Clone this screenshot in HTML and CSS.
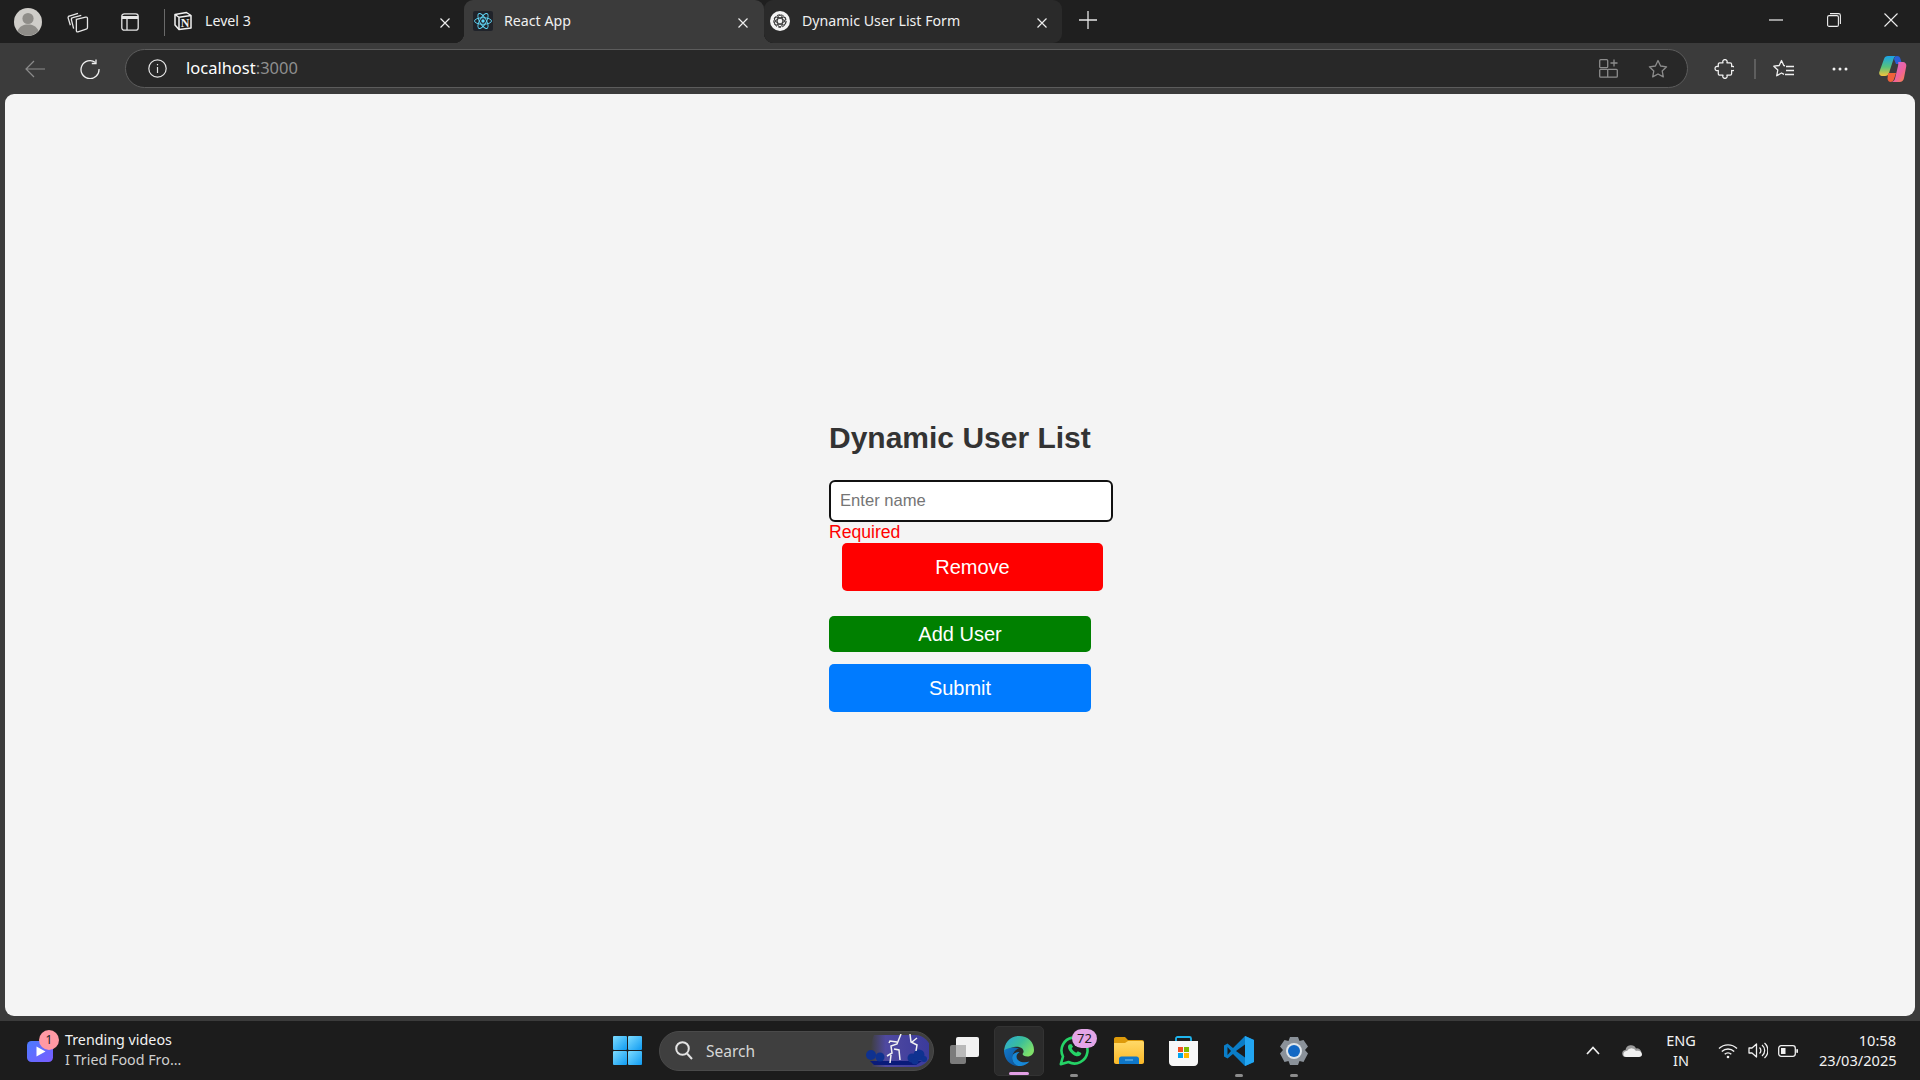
FILE: index.html
```html
<!DOCTYPE html>
<html lang="en">
<head>
<meta charset="utf-8">
<title>Dynamic User List</title>
<link rel="stylesheet" href="styles.css">
</head>
<body>
<header class="tabstrip">
  <div class="slot s-avatar">
    <svg width="28" height="28" viewBox="0 0 28 28"><circle cx="14" cy="14" r="14" fill="#cfcdc9"/><circle cx="14" cy="10.5" r="5.6" fill="#8f8d89"/><path d="M3.5 23c2-5 6-6.500 10.500-6.500S22.500 18 24.500 23a14 14 0 0 1-21 0z" fill="#8f8d89"/></svg>
  </div>
  <div class="slot s-coll">
    <svg width="24" height="24" viewBox="0 0 22 22" fill="none" stroke="#e6e6e6" stroke-width="1.200"><path d="M4 14 2 7.500c-.3-1 .2-1.800 1-2L11 3"/><path d="M7 17 5 9c-.2-1 .2-1.800 1.200-2L14 5"/><path d="M9.500 8.500 18 6.500c1-.2 1.700.3 1.700 1.300V16c0 .8-.4 1.300-1.200 1.500L11 20c-1 .3-1.500-.3-1.500-1.200V9.500z"/></svg>
  </div>
  <div class="slot s-side">
    <svg width="18" height="18" viewBox="0 0 18 18" fill="none" stroke="#e6e6e6" stroke-width="1.300"><rect x=".8" y=".8" width="16.400" height="16.400" rx="2.500"/><path d="M1 4.500h16" stroke-width="3"/><path d="M6 5v12"/></svg>
  </div>
  <div class="tab-divider"></div>
  <div class="tab tab-plain">
    <svg class="tab-icon" width="20" height="20" viewBox="0 0 20 20"><path d="M2 3.500 13.500 1.500 18 4.500V17l-12 1.500L2 14z" fill="#1d1d1d" stroke="#f2f2f2" stroke-width="1.500" stroke-linejoin="round"/><path d="M2 3.500 6 6.300 18 4.500M6 6.300V18" fill="none" stroke="#f2f2f2" stroke-width="1.500"/><text x="12" y="15.500" class="notion-n">N</text></svg>
    <span class="tab-title">Level 3</span>
    <svg class="tab-x" width="12" height="12" viewBox="0 0 12 12"><path d="M1.500 1.500l9 9M10.500 1.500l-9 9" stroke="#eee" stroke-width="1.200"/></svg>
  </div>
  <div class="tab tab-active">
    <svg class="tab-icon" width="20" height="20" viewBox="0 0 20 20"><rect width="20" height="20" rx="2" fill="#20232a"/><g fill="none" stroke="#61dafb" stroke-width=".9"><ellipse cx="10" cy="10" rx="8.500" ry="3.300"/><ellipse cx="10" cy="10" rx="8.500" ry="3.300" transform="rotate(60 10 10)"/><ellipse cx="10" cy="10" rx="8.500" ry="3.300" transform="rotate(120 10 10)"/></g><circle cx="10" cy="10" r="1.700" fill="#61dafb"/></svg>
    <span class="tab-title">React App</span>
    <svg class="tab-x" width="12" height="12" viewBox="0 0 12 12"><path d="M1.500 1.500l9 9M10.500 1.500l-9 9" stroke="#eee" stroke-width="1.200"/></svg>
  </div>
  <div class="tab tab-third">
    <svg class="tab-icon" width="20" height="20" viewBox="0 0 20 20"><circle cx="10" cy="10" r="10" fill="#f4f4f4"/><g fill="none" stroke="#333" stroke-width="1"><circle cx="10" cy="10" r="6.200" stroke-dasharray="3 1.200"/><ellipse cx="10" cy="10" rx="6" ry="2.800" transform="rotate(30 10 10)"/><ellipse cx="10" cy="10" rx="6" ry="2.800" transform="rotate(90 10 10)"/><ellipse cx="10" cy="10" rx="6" ry="2.800" transform="rotate(150 10 10)"/></g></svg>
    <span class="tab-title">Dynamic User List Form</span>
    <svg class="tab-x" width="12" height="12" viewBox="0 0 12 12"><path d="M1.500 1.500l9 9M10.500 1.500l-9 9" stroke="#eee" stroke-width="1.200"/></svg>
  </div>
  <div class="slot s-plus">
    <svg width="18" height="18" viewBox="0 0 18 18"><path d="M9 0v18M0 9h18" stroke="#e6e6e6" stroke-width="1.300"/></svg>
  </div>
  <div class="window-controls">
    <div class="slot s-win"><svg width="14" height="2" viewBox="0 0 14 2"><path d="M0 1h14" stroke="#eee" stroke-width="1.200"/></svg></div>
    <div class="slot s-win"><svg width="14" height="14" viewBox="0 0 14 14" fill="none" stroke="#eee" stroke-width="1.100"><rect x=".6" y="2.600" width="10.800" height="10.800" rx="1.500"/><path d="M3 .6h8.500c1.100 0 1.900.8 1.900 1.900V11"/></svg></div>
    <div class="slot s-win"><svg width="14" height="14" viewBox="0 0 14 14"><path d="M.5.500l13 13M13.500.500l-13 13" stroke="#eee" stroke-width="1.100"/></svg></div>
  </div>
</header>

<nav class="toolbar">
  <div class="slot s-back"><svg width="20" height="18" viewBox="0 0 20 18" fill="none" stroke="#8b8b8b" stroke-width="1.200"><path d="M20 9H1M9 1 1 9l8 8"/></svg></div>
  <div class="slot s-reload"><svg width="20" height="20" viewBox="0 0 20 20" fill="none" stroke="#f0f0f0" stroke-width="1.300"><path d="M15.500 3.500A9 9 0 1 0 19 10"/><path d="M16 .5v4h-4.200" /></svg></div>
  <div class="address">
    <svg class="addr-info" width="19" height="19" viewBox="0 0 19 19" fill="none" stroke="#e6e6e6" stroke-width="1.200"><circle cx="9.500" cy="9.500" r="8.700"/><path d="M9.500 8v6"/><path d="M9.500 5v1.300"/></svg>
    <span class="addr-text">localhost<span class="addr-port">:3000</span></span>
    <svg class="addr-grid" width="19" height="19" viewBox="0 0 19 19" fill="none" stroke="#8c8c8c" stroke-width="1.300"><rect x=".7" y=".7" width="8" height="8" rx="1"/><path d="M1.700 10.300h6c.6 0 1 .4 1 1v6.900h-7c-.6 0-1-.4-1-1v-5.900c0-.6.4-1 1-1zM8.700 10.300h8.600c.6 0 1 .4 1 1v5.900c0 .6-.4 1-1 1H8.700"/><path d="M15 .5v7M11.500 4h7"/></svg>
    <svg class="addr-star" width="20" height="20" viewBox="0 0 20 20" fill="none" stroke="#8c8c8c" stroke-width="1.300"><path d="M10 1.500l2.600 5.500 6 .8-4.400 4.100 1.100 6-5.300-2.900-5.300 2.900 1.100-6L1.400 7.800l6-.8z" stroke-linejoin="round"/></svg>
  </div>
  <div class="slot s-puzzle"><svg width="20" height="20" viewBox="-2.500 0 21 21" fill="none" stroke="#f0f0f0" stroke-width="1.300"><path d="M3.500 4H7a2.300 2.300 0 1 1 4 0h3.500c.8 0 1.500.7 1.500 1.500V8a2.300 2.300 0 1 1 0 4v3.500c0 .8-.7 1.500-1.500 1.500H11a2.300 2.300 0 1 1-4 0H3.500c-.8 0-1.500-.7-1.500-1.500V12a2.300 2.300 0 1 1 0-4V5.500C2 4.700 2.700 4 3.500 4z" stroke-linejoin="round"/></svg></div>
  <div class="tool-divider"></div>
  <div class="slot s-favs"><svg width="21" height="19" viewBox="0 0 21 19" fill="none" stroke="#f0f0f0" stroke-width="1.300"><path d="M12 6.800 10.800 6.500 8.500 1.500 6.200 6.500 .8 7.200 4.800 11 3.700 16.800 8.500 14l2.500 1.400" stroke-linejoin="round"/><path d="M13 7.500h8M13 11.500h8M12 15.500h9"/></svg></div>
  <div class="slot s-dots"><svg width="16" height="4" viewBox="0 0 16 4" fill="#f0f0f0"><circle cx="2" cy="2" r="1.500"/><circle cx="8" cy="2" r="1.500"/><circle cx="14" cy="2" r="1.500"/></svg></div>
  <div class="slot s-copilot">
    <svg width="28" height="26" viewBox="0 0 28 26"><defs><linearGradient id="cpa" x1="0" y1="0" x2="0" y2="1"><stop offset="0" stop-color="#1aa3e8"/><stop offset=".55" stop-color="#57c27b"/><stop offset="1" stop-color="#f5c33b"/></linearGradient><linearGradient id="cpb" x1="0" y1="0" x2="1" y2="1"><stop offset="0" stop-color="#c86dd7"/><stop offset=".6" stop-color="#f0629a"/><stop offset="1" stop-color="#f88a3a"/></linearGradient></defs><path d="M9 0h9c-2 0-3 1-3.500 3L10 17c-.6 2-2 3-4 3H3c-2 0-3.300-1.800-2.700-4L5 3c.5-2 2-3 4-3z" fill="url(#cpa)"/><path d="M18 0c2 0 3 1 3.500 3L23 8l-6 0-2-5c.5-2 1.500-3 3-3z" fill="#2a5fd8"/><path d="M19 6h5c2 0 3.700 1.800 3.300 4L25 22c-.5 2.500-2 4-4.500 4H12c2 0 3.500-1.500 4-3.500L19 10c.4-2 .5-4 0-4z" fill="url(#cpb)"/><path d="M9 17h8l-2 6c-.5 2-1.800 3-3.500 3-1.500 0-2.500-1-3-3z" fill="#f0613a"/></svg>
  </div>
</nav>

<main class="viewport">
  <form class="user-form">
    <h2 class="form-title">Dynamic User List</h2>
    <input class="name-input" type="text" placeholder="Enter name">
    <div class="error">Required</div>
    <button type="button" class="btn btn-remove">Remove</button>
    <button type="button" class="btn btn-add">Add User</button>
    <button type="button" class="btn btn-submit">Submit</button>
  </form>
</main>

<footer class="taskbar">
  <div class="widget">
    <div class="widget-icon">
      <svg width="26" height="21" viewBox="0 0 26 21"><defs><linearGradient id="wg" x1="0" y1="0" x2="1" y2="1"><stop offset="0" stop-color="#4b7bff"/><stop offset="1" stop-color="#7a5cff"/></linearGradient></defs><rect width="26" height="21" rx="4.500" fill="url(#wg)"/><path d="M9.500 5.500l9 5-9 5z" fill="#fff"/></svg>
      <span class="widget-badge">1</span>
    </div>
    <div class="widget-text">
      <div class="widget-line1">Trending videos</div>
      <div class="widget-line2">I Tried Food Fro...</div>
    </div>
  </div>

  <div class="center-icons">
    <svg class="i-start" width="29" height="29" viewBox="0 0 29 29"><defs><linearGradient id="wn" x1="0" y1="0" x2="1" y2="1"><stop offset="0" stop-color="#7ddcff"/><stop offset="1" stop-color="#0f9bf2"/></linearGradient></defs><g fill="url(#wn)"><rect width="14" height="14" rx="1"/><rect x="15" width="14" height="14" rx="1"/><rect y="15" width="14" height="14" rx="1"/><rect x="15" y="15" width="14" height="14" rx="1"/></g></svg>
    <div class="search-pill">
      <svg class="search-glass" width="18" height="19" viewBox="0 0 18 19" fill="none" stroke="#e3e3e3" stroke-width="2"><circle cx="7.500" cy="7.500" r="6.300"/><path d="M12 12.500l5 5.500"/></svg>
      <span class="search-text">Search</span>
      <svg class="search-art" width="63" height="33" viewBox="0 0 63 33"><defs><linearGradient id="art" x1="0" y1="0" x2="1" y2="0"><stop offset="0" stop-color="#3f3f3f"/><stop offset=".25" stop-color="#4f49a0"/><stop offset="1" stop-color="#3a3a9c"/></linearGradient></defs><path d="M8 1h41a16 16 0 0 1 0 32H6C4 20 4 10 8 1z" fill="url(#art)"/><path d="M8 31h42l6-4H4z" fill="#0a1b7a"/><g fill="#0f3290"><circle cx="5" cy="21" r="5"/><circle cx="14" cy="23" r="4.500"/><circle cx="46" cy="24" r="4.500"/><circle cx="53" cy="21" r="5.500"/><circle cx="49" cy="27" r="3.500"/><circle cx="58" cy="25" r="3"/></g><g fill="none" stroke="#f2f2f2" stroke-width="1.500"><path d="M35 0l-4 10-6 2 1 7-5 3M31 8l-7-1-1 2M28 15l5 1 1 10M25 21l-1 8"/><path d="M44 0l1 8 6 3-1 6M46 8l5-4"/></g></svg>
    </div>
    <svg class="i-task" width="29" height="27" viewBox="0 0 29 27"><rect y="8" width="16" height="19" rx="2" fill="#7b7b7b"/><rect x="6" width="23" height="20" rx="2" fill="#f2f2f2"/><rect x="6" y="8" width="10" height="12" fill="#b9b9b9"/></svg>
    <div class="edge-tile">
      <svg width="30" height="30" viewBox="0 0 30 30"><defs><linearGradient id="ed1" x1="0" y1="0" x2="1" y2=".6"><stop offset="0" stop-color="#2aa6dc"/><stop offset=".55" stop-color="#3bbf9a"/><stop offset="1" stop-color="#7fe06a"/></linearGradient><linearGradient id="ed2" x1="0" y1="0" x2="1" y2="1"><stop offset="0" stop-color="#1379c9"/><stop offset="1" stop-color="#0b4f98"/></linearGradient></defs><path d="M15 0C24 0 30 6 30 14c0 4-3 6.500-6.500 6.500-3 0-5-1.500-5-2.500 2-1.500 1.500-6-3.500-7-4-.7-11 1-15 5.500C0 7 6 0 15 0z" fill="url(#ed1)"/><path d="M0 14.500C0 23 6 30 14 30c-4-1.500-7-6-5.500-10.500C9.500 15 13 12 16 13c-6-3-13-1-16 1.500z" fill="url(#ed2)"/><path d="M8.500 19.500C7 24 10 28.500 14 30c4 .5 8.500-1 11.500-4.500-4 1.500-9.500 1-12-2-1.500-2-1.500-5 2-7.500-3-.5-6 1.500-7 3.500z" fill="#1788d8"/></svg>
      <span class="edge-ind"></span>
    </div>
    <div class="app app-wa">
      <svg width="30" height="30" viewBox="0 0 30 30" fill="none"><path d="M1.800 28.200 4 20.500A13 13 0 1 1 9.500 26z" stroke="#25d366" stroke-width="2.600" stroke-linejoin="round"/><path d="M10 8.500c-1.200 1.200-1.500 3 0 5.800 1.800 3 4.500 5.200 7.500 6 3 .4 4.800-1.200 4.800-3.200l-3.500-1.800-1.500 1.500c-1.800-.7-3.800-2.600-4.600-4.600l1.400-1.500L12.300 8z" fill="#25d366"/></svg>
      <span class="wa-badge">72</span>
      <span class="run-ind"></span>
    </div>
    <svg class="i-folder" width="30" height="27" viewBox="0 0 30 27"><path d="M0 2c0-1 .7-2 2-2h9l3 3h14c1.200 0 2 .8 2 2v3H0z" fill="#dd9a0a"/><defs><linearGradient id="fo" x1="0" y1="0" x2="0" y2="1"><stop offset="0" stop-color="#ffd968"/><stop offset="1" stop-color="#fbb827"/></linearGradient></defs><path d="M0 6h11l3-2h14c1.200 0 2 .8 2 2v19c0 1-.8 2-2 2H2c-1.200 0-2-1-2-2z" fill="url(#fo)"/><path d="M5 27v-5c0-1.500.8-2.500 2.500-2.500h15c1.500 0 2.500 1 2.500 2.500v5z" fill="#0f77c9"/><path d="M11 23h8" stroke="#7ec4f0" stroke-width="1"/></svg>
    <svg class="i-store" width="29" height="30" viewBox="0 0 29 30"><path d="M7 6V2.500C7 1.500 7.800 1 8.500 1h12c.8 0 1.500.5 1.500 1.500V6" fill="none" stroke="#1fb5ee" stroke-width="1.800"/><path d="M0 5h29v21c0 2-1.500 4-4 4H4c-2.500 0-4-2-4-4z" fill="#f7f7f7"/><rect x="9" y="11" width="5" height="5" fill="#f25022"/><rect x="15" y="11" width="5" height="5" fill="#7fba00"/><rect x="9" y="17" width="5" height="5" fill="#00a4ef"/><rect x="15" y="17" width="5" height="5" fill="#ffb900"/></svg>
    <div class="app app-code">
      <svg width="30" height="30" viewBox="0 0 30 30"><path d="M21 0 9 12 3.500 7.500 0 9.500V20.500L3.500 22.500 9 18 21 30 30 26V4z" fill="#0a7dc7"/><path d="M21 0 30 4V26L21 30z" fill="#22a5f1"/><path d="M21 8.500v13L12 15z" fill="#1b1b1b"/><path d="M3.500 11v8L7 15z" fill="#1b1b1b"/></svg>
      <span class="run-ind"></span>
    </div>
    <div class="app app-gear">
      <svg width="30" height="28" viewBox="0 0 30 28"><path d="M11 0h8l1.500 4 4-1 4.500 6.500-3 3.500 3 3.500-4.500 8.500-4-1L19 28h-8l-1.500-4-4 1L1 16.500 4 13 1 9.500 5.500 3l4 1z" fill="#8a9199"/><circle cx="15" cy="14" r="8" fill="#dfe5ea"/><circle cx="15" cy="14" r="6" fill="#1268c4"/></svg>
      <span class="run-ind"></span>
    </div>
  </div>

  <div class="tray">
    <div class="tslot t-chev"><svg width="14" height="9" viewBox="0 0 14 9" fill="none" stroke="#f0f0f0" stroke-width="1.700"><path d="M1 8l6-6.500L13 8"/></svg></div>
    <div class="tslot t-cloud"><svg width="20" height="13" viewBox="0 0 20 13"><path d="M4 13a3.500 3.500 0 0 1-.5-7A5.500 5.500 0 0 1 14 4.500 4.200 4.200 0 0 1 16 13z" fill="#9c9c9c"/><path d="M4 13a3 3 0 0 1 1-6 5 5 0 0 1 9 0c4-1 6 1.500 6 3.500 0 1.500-1.200 2.500-3 2.500z" fill="#f1f1f1"/></svg></div>
    <div class="lang"><div>ENG</div><div>IN</div></div>
    <div class="tslot t-wifi"><svg width="20" height="16" viewBox="0 0 20 16" fill="none" stroke="#f0f0f0" stroke-width="1.400"><path d="M1 5.500a13 13 0 0 1 18 0M3.800 8.500a9 9 0 0 1 12.400 0M6.700 11.300a4.800 4.800 0 0 1 6.600 0"/><circle cx="10" cy="14" r="1.300" fill="#f0f0f0" stroke="none"/></svg></div>
    <div class="tslot t-vol"><svg width="20" height="17" viewBox="0 0 20 17" fill="none" stroke="#f0f0f0" stroke-width="1.300"><path d="M1 6h3l4.500-4v13L4 11H1z" stroke-linejoin="round"/><path d="M11.500 5.500a4 4 0 0 1 0 6M14 3a7 7 0 0 1 0 11M16.500 1a10 10 0 0 1 0 15"/></svg></div>
    <div class="tslot t-batt"><svg width="20" height="12" viewBox="0 0 20 12"><rect x=".7" y=".7" width="16.600" height="10.600" rx="2.500" fill="none" stroke="#f0f0f0" stroke-width="1.300"/><rect x="3" y="3" width="4.500" height="6" fill="#f0f0f0"/><rect x="18.300" y="4" width="1.700" height="4" rx=".8" fill="#f0f0f0"/></svg></div>
    <div class="clock"><div>10:58</div><div>23/03/2025</div></div>
  </div>
</footer>
</body>
</html>
```
FILE: styles.css
```css
* { box-sizing: border-box; }
html, body { margin: 0; height: 100%; }
body {
  width: 1920px;
  height: 1080px;
  overflow: hidden;
  display: flex;
  flex-direction: column;
  background: #3b3b3b;
  font-family: "Noto Sans", "Open Sans", sans-serif;
  color: #f2f2f2;
}
svg { display: block; flex: none; }

.slot { display: flex; align-items: center; justify-content: center; flex: none; }

/* Tab strip */
.tabstrip { height: 43px; flex: none; display: flex; background: #1f1f1f; }
.s-avatar { width: 56px; }
.s-coll { width: 44px; }
.s-side { width: 60px; }
.tab-divider { width: 1px; height: 27px; margin: 9px 3px 0 4px; background: #6a6a6a; flex: none; }
.tab { position: relative; display: flex; align-items: center; height: 43px; flex: none; }
.tab-title { flex: 1; font-size: 14.200px; white-space: nowrap; margin-bottom: 3px; color: #f0f0f0; }
.tab-icon { margin-bottom: 2px; }
.tab-x { margin-top: 2px; }
.tab-plain { width: 296px; padding: 0 13px 0 5px; gap: 12px; }
.tab-active { width: 300px; padding: 0 15px 0 9px; gap: 11px; background: #3b3b3b; border-radius: 9px 9px 0 0; }
.tab-active::before, .tab-active::after {
  content: ""; position: absolute; bottom: 0; width: 10px; height: 10px;
}
.tab-active::before { left: -10px; background: radial-gradient(circle at 0 0, transparent 10px, #3b3b3b 10.500px); }
.tab-active::after { right: -10px; background: radial-gradient(circle at 100% 0, transparent 10px, #3b3b3b 10.500px); z-index: 0; }
.tab-third { width: 298px; padding: 0 14px 0 6px; gap: 12px; background: #2a2a2a; border-radius: 9px; z-index: 1; }
.notion-n { font-family: "Liberation Serif", serif; font-weight: 700; font-size: 12px; fill: #f2f2f2; text-anchor: middle; }
.s-plus { width: 52px; margin-bottom: 3px; }
.window-controls { display: flex; margin-left: auto; }
.s-win { width: 57.500px; margin-bottom: 3px; }

/* Toolbar */
.toolbar { height: 51px; flex: none; display: flex; align-items: center; background: #3b3b3b; }
.s-back { width: 70px; }
.s-reload { width: 40px; }
.address {
  width: 1563px; height: 39px; margin-left: 15px; display: flex; align-items: center;
  background: #282828; border: 1.500px solid #5c5c5c; border-radius: 20px; padding: 0 10px 0 22px; flex: none;
}
.addr-text { font-size: 16.500px; margin: 0 0 2px 19px; color: #fff; flex: 1; }
.addr-port { color: #8f8f8f; }
.addr-star { margin-left: 30px; margin-right: 9px; }
.s-puzzle { width: 54px; margin-left: 9px; }
.tool-divider { width: 1.500px; height: 20px; margin-left: 3px; background: #5e5e5e; flex: none; }
.s-favs { width: 56px; }
.s-dots { width: 50px; margin-left: 3px; }
.s-copilot { width: 56px; }

/* Page */
.viewport {
  flex: 1; margin: 0 5px 5px; background: #f4f4f4; border-radius: 9px;
  display: flex; justify-content: center; padding-top: 326px; min-height: 0;
}
.user-form { width: 262px; font-family: "Liberation Sans", Arial, sans-serif; }
.form-title { margin: 0 0 25px; font-size: 30px; line-height: 35px; font-weight: 700; color: #333; white-space: nowrap; }
.name-input {
  display: block; width: 284px; height: 42px; padding: 0 9px 1px; background: #fff;
  border: 2px solid #111; border-radius: 6px; outline: none;
  font-family: inherit; font-size: 16.600px;
}
.name-input::placeholder { color: #757575; }
.error { height: 21px; font-size: 17.600px; line-height: 21px; color: #f00; }
.btn {
  display: block; width: 262px; height: 48px; border: 0; border-radius: 5px; padding: 0;
  font-family: inherit; font-size: 20px; color: #fff;
}
.btn-remove { width: 261px; margin: 0 0 25px 13px; background: #f00; }
.btn-add { height: 36px; margin-bottom: 12px; background: #008000; }
.btn-submit { background: #007bff; }

/* Taskbar */
.taskbar { height: 59px; flex: none; display: flex; align-items: center; background: #1c1c1c; position: relative; }
.widget { width: 613px; display: flex; align-items: center; padding-left: 27px; flex: none; }
.widget-icon { position: relative; width: 26px; height: 21px; margin-top: 2px; }
.widget-badge {
  position: absolute; right: -6px; top: -11px; width: 20px; height: 20px; border-radius: 50%;
  background: #ff99a4; color: #222; font-size: 12px; line-height: 20px; text-align: center;
}
.widget-text { margin-left: 12px; font-size: 14.300px; line-height: 20px; white-space: nowrap; margin-top: -2px; }
.widget-line2 { color: #cfcfcf; }
.center-icons { display: flex; align-items: center; flex: none; }
.search-pill {
  width: 275px; height: 40px; margin-left: 17px; padding: 0 4px 0 15px; display: flex; align-items: center;
  border-radius: 20px; background: #3f3f3f; border: 1px solid #4a4a4a; flex: none;
}
.search-text { flex: 1; margin-left: 13px; font-size: 15.500px; color: #d6d6d6; }
.i-task { margin-left: 16px; }
.edge-tile {
  position: relative; width: 50px; height: 50px; margin-left: 15px; display: flex; align-items: center; justify-content: center;
  background: #2b2b2b; border-radius: 5px; border: 1px solid #333; flex: none;
}
.edge-ind { position: absolute; left: 14px; bottom: 0; width: 20px; height: 3px; border-radius: 2px; background: #e3a0e6; }
.app { position: relative; display: flex; align-items: center; justify-content: center; flex: none; height: 50px; }
.app-wa { width: 30px; margin-left: 15px; }
.wa-badge {
  position: absolute; left: 13px; top: 3px; width: 25px; height: 19px; border-radius: 10px;
  background: #e3a6e8; color: #1a1a1a; font-size: 13px; line-height: 19px; text-align: center;
}
.run-ind { position: absolute; left: 50%; bottom: -1px; width: 8px; height: 3px; margin-left: -4px; border-radius: 2px; background: #8c8c8c; }
.i-folder { margin-left: 25px; }
.i-store { margin-left: 25px; }
.app-code { width: 30px; margin-left: 26px; }
.app-gear { width: 30px; margin-left: 25px; }

.tray { position: absolute; right: 0; top: 0; height: 59px; width: 337px; display: flex; align-items: center; }
.tslot { display: flex; justify-content: center; flex: none; width: 20px; }
.t-cloud { margin-left: 19px; }
.lang { width: 30px; margin: -2px 0 0 24px; font-size: 14.500px; line-height: 20px; text-align: center; flex: none; }
.t-wifi { margin-left: 22px; }
.t-vol { margin-left: 10px; }
.t-batt { margin-left: 10px; }
.clock { margin: -2px 0 0 21px; width: 77px; font-size: 14.600px; line-height: 20px; text-align: right; white-space: nowrap; flex: none; }
```
